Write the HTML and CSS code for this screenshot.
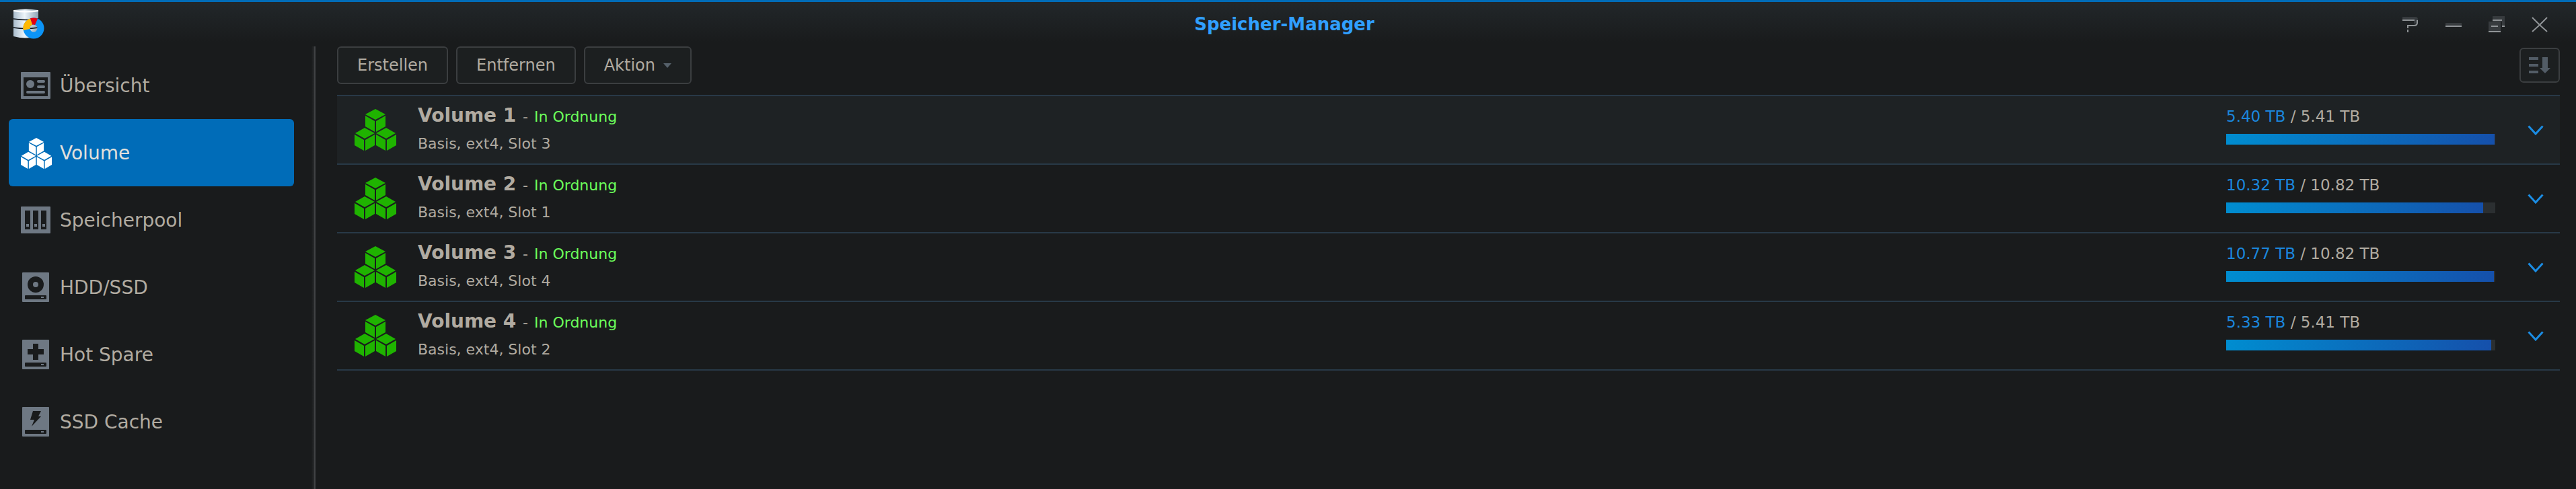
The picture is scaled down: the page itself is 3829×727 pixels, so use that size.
FILE: index.html
```html
<!DOCTYPE html>
<html lang="de">
<head>
<meta charset="utf-8">
<title>Speicher-Manager</title>
<link rel="stylesheet" href="styles.css">
</head>
<body>
<svg class="defs" aria-hidden="true">
  <defs>
    <symbol id="cubes" viewBox="0 0 62 62">
      <path d="M31 0L46 8L31 16L16 8Z"/><path d="M16 10L30 18V34L16 26Z"/><path d="M46 10L32 18V34L46 26Z"/>
      <path d="M15 28L30 36L15 44L1 36Z"/><path d="M0 38L14 46V62L0 54Z"/><path d="M30 38L16 46V62L30 54Z"/>
      <path d="M47 28L61 36L47 44L32 36Z"/><path d="M32 38L46 46V62L32 54Z"/><path d="M62 38L48 46V62L62 54Z"/>
    </symbol>
    <symbol id="chevron" viewBox="0 0 24 15"><path d="M1.500 1.500L12 13L22.500 1.500" fill="none" stroke="currentColor" stroke-width="3"/></symbol>
    <linearGradient id="steel"><stop offset="0" stop-color="#a9bccd"/><stop offset=".45" stop-color="#edf5fa"/><stop offset="1" stop-color="#8ea5b8"/></linearGradient>
  </defs>
</svg>
<div class="window">
  <header class="titlebar">
    <svg class="logo" viewBox="0 0 48 46" aria-hidden="true">
      <path d="M1 2Q20-1 38 2V41Q20 46 1 41Z" fill="url(#steel)"/>
      <path d="M1 3Q20 6 38 3" fill="none" stroke="#fff" stroke-width="2"/>
      <path d="M1 15Q19 18 38 15M1 28Q19 31 38 28" fill="none" stroke="#10161c" stroke-width="1.500"/>
      <circle cx="31" cy="29" r="10.500" fill="none" stroke="#0c94f7" stroke-width="10"/>
      <path d="M15.500 32A15.500 15.500 0 0 1 26 14.500L29.300 23.800A5.500 5.500 0 0 0 25.600 30Z" fill="#ffb800"/>
      <path d="M26 14.300A15.500 15.500 0 0 1 37 14.800L33 24A5.500 5.500 0 0 0 29.300 23.800Z" fill="#e60012"/>
    </svg>
    <h1 class="title">Speicher-Manager</h1>
    <div class="controls">
      <button class="control" aria-label="Hilfe"><svg viewBox="0 0 24 24"><path class="dim" d="M0 1H19Q23 1 23 5V11H17V7H0Z"/><path d="M0 6H18M22 6V10Q22 14 17 14H8V18M8 20V24"/></svg></button>
      <button class="control" aria-label="Minimieren"><svg viewBox="0 0 24 24"><path class="dim" d="M0 10H24V14H0Z"/><path d="M0 15H24"/></svg></button>
      <button class="control" aria-label="Maximieren"><svg viewBox="0 0 24 24"><path class="dim" d="M6 0H24V14H20V8H6ZM0 8H18V22H0Z"/><path d="M6 6H20M20 15H24M4 15H14M0 23H18"/></svg></button>
      <button class="control" aria-label="Schließen"><svg viewBox="0 0 24 24"><path d="M1 2L12 13L23 2M1 23L12 13L23 23"/></svg></button>
    </div>
  </header>
  <div class="body">
    <nav class="sidebar">
      <a class="item" href="#"><svg class="icon" viewBox="0 0 48 48"><path fill-rule="evenodd" d="M3 4H45Q46 4 46 5V43Q46 44 45 44H3Q2 44 2 43V5Q2 4 3 4ZM6 12V40H42V12Z"/><circle cx="16" cy="22" r="6"/><path class="line" d="M28 18H36M28 26H36M12 34H36"/></svg>Übersicht</a>
      <a class="item active" href="#" aria-current="page"><svg class="icon" viewBox="0 0 48 48"><use href="#cubes" x="2" y="2" width="46" height="46"/></svg>Volume</a>
      <a class="item" href="#"><svg class="icon" viewBox="0 0 48 48"><rect x="2" y="4" width="44" height="40" rx="1"/><path class="hole" d="M8 10H16V38H8ZM20 10H28V38H20ZM32 10H40V38H32Z"/><path d="M10 30H14V34H10ZM22 30H26V34H22ZM34 30H38V34H34Z"/></svg>Speicherpool</a>
      <a class="item" href="#"><svg class="icon" viewBox="0 0 48 48"><rect x="4" y="2" width="40" height="44" rx="1"/><circle class="hole" cx="24" cy="20" r="12"/><circle cx="24" cy="20" r="4"/><rect class="hole" x="8" y="36" width="32" height="6" rx="1"/><path d="M32 38H36V40H32Z"/></svg>HDD/SSD</a>
      <a class="item" href="#"><svg class="icon" viewBox="0 0 48 48"><rect x="4" y="2" width="40" height="44" rx="1"/><path class="hole" d="M20 8H28V16H36V24H28V32H20V24H12V16H20Z"/><rect class="hole" x="8" y="36" width="32" height="6" rx="1"/><path d="M32 38H36V40H32Z"/></svg>Hot Spare</a>
      <a class="item" href="#"><svg class="icon" viewBox="0 0 48 48"><rect x="4" y="2" width="40" height="44" rx="1"/><path class="hole" d="M20 8H32L28 16H32L18 31L22 21H16Z"/><rect class="hole" x="8" y="36" width="32" height="6" rx="1"/><path d="M32 38H36V40H32Z"/></svg>SSD Cache</a>
    </nav>
    <main class="content">
      <div class="toolbar">
        <button class="button">Erstellen</button>
        <button class="button">Entfernen</button>
        <button class="button">Aktion<svg class="caret" viewBox="0 0 12 7" aria-hidden="true"><path d="M0 0H12L6 7Z"/></svg></button>
        <button class="button sort" aria-label="Sortieren"><svg viewBox="0 0 32 24"><path d="M0 0H14V4H0ZM0 10H14V14H0ZM0 20H14V24H0ZM20 0H28V16H32L24 24L16 16H20Z"/></svg></button>
      </div>
      <ul class="volumes">
        <li class="volume hover">
          <svg class="cubes" aria-hidden="true"><use href="#cubes"/></svg>
          <div class="info"><h2 class="name">Volume 1 <span class="state">- <span class="ok">In Ordnung</span></span></h2><p class="detail">Basis, ext4, Slot 3</p></div>
          <div class="usage"><p class="size"><span class="used">5.40 TB</span> / 5.41 TB</p><div class="bar"><div class="fill" style="width:99.8%"></div></div></div>
          <button class="expand" aria-label="Volume 1 aufklappen"><svg><use href="#chevron"/></svg></button>
        </li>
        <li class="volume">
          <svg class="cubes" aria-hidden="true"><use href="#cubes"/></svg>
          <div class="info"><h2 class="name">Volume 2 <span class="state">- <span class="ok">In Ordnung</span></span></h2><p class="detail">Basis, ext4, Slot 1</p></div>
          <div class="usage"><p class="size"><span class="used">10.32 TB</span> / 10.82 TB</p><div class="bar"><div class="fill" style="width:95.4%"></div></div></div>
          <button class="expand" aria-label="Volume 2 aufklappen"><svg><use href="#chevron"/></svg></button>
        </li>
        <li class="volume">
          <svg class="cubes" aria-hidden="true"><use href="#cubes"/></svg>
          <div class="info"><h2 class="name">Volume 3 <span class="state">- <span class="ok">In Ordnung</span></span></h2><p class="detail">Basis, ext4, Slot 4</p></div>
          <div class="usage"><p class="size"><span class="used">10.77 TB</span> / 10.82 TB</p><div class="bar"><div class="fill" style="width:99.6%"></div></div></div>
          <button class="expand" aria-label="Volume 3 aufklappen"><svg><use href="#chevron"/></svg></button>
        </li>
        <li class="volume">
          <svg class="cubes" aria-hidden="true"><use href="#cubes"/></svg>
          <div class="info"><h2 class="name">Volume 4 <span class="state">- <span class="ok">In Ordnung</span></span></h2><p class="detail">Basis, ext4, Slot 2</p></div>
          <div class="usage"><p class="size"><span class="used">5.33 TB</span> / 5.41 TB</p><div class="bar"><div class="fill" style="width:98.6%"></div></div></div>
          <button class="expand" aria-label="Volume 4 aufklappen"><svg><use href="#chevron"/></svg></button>
        </li>
      </ul>
    </main>
  </div>
</div>
</body>
</html>
```
FILE: styles.css
```css
* { box-sizing: border-box; }
body { margin: 0; background: #191b1c; color: #b1aba1; font-family: "DejaVu Sans", Verdana, sans-serif; font-size: 22px; }
h1, h2, p, ul { margin: 0; padding: 0; }
button { font: inherit; color: inherit; background: none; border: 0; padding: 0; }
.defs { position: absolute; width: 0; height: 0; }

.window { display: flex; flex-direction: column; min-height: 100vh; border-top: 3px solid #006cb8; background: linear-gradient(#22272a, #191b1c 60px); }
.titlebar { display: grid; grid-template-columns: 1fr auto 1fr; align-items: center; height: 66px; padding: 0 42px 0 19px; }
.logo { width: 48px; height: 46px; }
.title { padding-left: 12px; color: #309fff; font-size: 26px; line-height: 32px; font-weight: bold; }
.controls { display: flex; justify-content: flex-end; gap: 40px; }
.control { width: 24px; height: 24px; }
.control svg { display: block; width: 24px; height: 24px; fill: none; stroke: #909497; stroke-width: 2; }
.control .dim { fill: #373b3e; stroke: none; }

.body { display: flex; flex: 1; }
.sidebar { width: 469px; padding: 8px 32px 0 13px; background: linear-gradient(90deg, #191b1c, #2a2c2e 4px, #404244 4px) right / 6px 100% no-repeat; }
.item { display: flex; align-items: center; gap: 12px; height: 100px; padding-left: 16px; border-radius: 6px; color: #b1aba1; font-size: 28px; text-decoration: none; }
.item.active { background: #006cb8; color: #e2e0dc; }
.icon { width: 48px; height: 48px; fill: #6e7883; }
.active .icon { fill: #fff; }
.icon .hole { fill: #191b1c; }
.icon .line { stroke: #6e7883; stroke-width: 4; stroke-linecap: round; }

.content { flex: 1; padding: 0 24px 0 32px; }
.toolbar { display: flex; align-items: center; gap: 12px; }
.button { display: flex; align-items: center; justify-content: center; height: 56px; padding: 0 28px; border: 2px solid #3b3e40; border-radius: 6px; background: #1c1f20; font-size: 24px; }
.caret { width: 12px; height: 7px; margin-left: 12px; fill: #56616b; }
.sort { width: 60px; height: 52px; margin-left: auto; padding: 0; }
.sort svg { width: 32px; height: 24px; fill: #525c66; }

.volumes { margin-top: 16px; border-top: 2px solid #283947; list-style: none; }
.volume { display: flex; align-items: center; height: 102px; padding: 0 24px 0 26px; border-bottom: 2px solid #283947; }
.volume.hover { background: #1e2224; }
.cubes { width: 62px; height: 62px; fill: #1fb300; }
.info { flex: 1; padding-left: 32px; }
.name { font-size: 28px; line-height: 40px; }
.state { font-size: 22px; font-weight: normal; }
.ok { margin-left: 2px; color: #6cff5b; }
.detail { line-height: 40px; }
.usage { width: 400px; margin-right: 48px; padding-bottom: 14px; }
.size { font-size: 23px; line-height: 32px; }
.used { color: #1b86dc; }
.bar { height: 16px; margin-top: 10px; background: #2b2f31; }
.fill { height: 100%; background: linear-gradient(90deg, #008dd0, #1550ab); }
.expand { width: 24px; height: 15px; color: #1b8de4; }
.expand svg { display: block; width: 24px; height: 15px; }
```
